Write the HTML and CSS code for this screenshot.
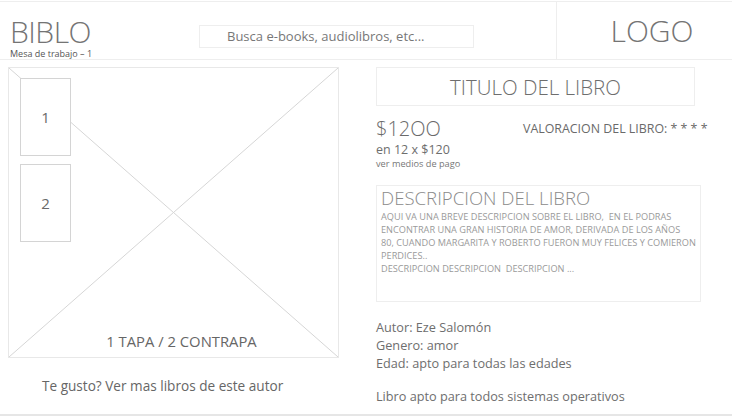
FILE: index.html
```html
<html>
<head>
<meta charset="utf-8">
<meta name="viewport" content="width=device-width, initial-scale=1">
<link rel="stylesheet" href="styles.css">
</head>
<body>
	<div class="header">
		<div class="brand">
			<div class="brand-name">BIBLO</div>
			<div class="brand-sub">Mesa de trabajo – 1</div>
		</div>
		<div class="search">Busca e-books, audiolibros, etc...</div>
		<div class="logo">LOGO</div>
	</div>
	<div class="main">
		<div class="left">
			<div class="cover">
				<svg class="cross" viewBox="0 0 100 100" preserveAspectRatio="none">
					<line x1="0" y1="0" x2="100" y2="100" vector-effect="non-scaling-stroke"></line>
					<line x1="100" y1="0" x2="0" y2="100" vector-effect="non-scaling-stroke"></line>
				</svg>
				<div class="thumb">1</div>
				<div class="thumb">2</div>
				<div class="cover-label">1 TAPA / 2 CONTRAPA</div>
			</div>
			<p class="more">Te gusto? Ver mas libros de este autor</p>
		</div>
		<div class="right">
			<div class="title">TITULO DEL LIBRO</div>
			<div class="price-row">
				<div class="price">
					<div class="price-main">$12OO</div>
					<div class="price-cuotas">en 12 x $120</div>
					<div class="price-link">ver medios de pago</div>
				</div>
				<div class="rating">VALORACION DEL LIBRO: * * * *</div>
			</div>
			<div class="desc">
				<div class="desc-title">DESCRIPCION DEL LIBRO</div>
				<div class="desc-text">AQUI VA UNA BREVE DESCRIPCION SOBRE EL LIBRO, &nbsp;EN EL PODRAS<br>ENCONTRAR UNA GRAN HISTORIA DE AMOR, DERIVADA DE LOS AÑOS<br>80, CUANDO MARGARITA Y ROBERTO FUERON MUY FELICES Y COMIERON<br>PERDICES..<br>DESCRIPCION DESCRIPCION &nbsp;DESCRIPCION ...</div>
			</div>
			<div class="info">
				<div>Autor: Eze Salomón</div>
				<div>Genero: amor</div>
				<div>Edad: apto para todas las edades</div>
			</div>
			<div class="os">Libro apto para todos sistemas operativos</div>
		</div>
	</div>
</body>
</html>
```

FILE: styles.css
```css
body {
	margin: 0;
	background: #fff;
	color: #6e6e6e;
	font-family: "Open Sans", "Noto Sans", sans-serif;
	width: 732px;
	height: 420px;
	overflow: hidden;
	border-top: 1px solid #eee;
	box-sizing: border-box;
	margin-top: 1px;
}

.header {
	display: flex;
	align-items: flex-start;
	height: 57px;
	border-bottom: 1px solid #eee;
}

.brand {
	padding: 15px 0 0 10px;
	width: 189px;
}

.brand-name {
	font-size: 30px;
	font-weight: 300;
	line-height: 30px;
	color: #747474;
	letter-spacing: -0.5px;
}

.brand-sub {
	font-size: 9px;
	line-height: 11px;
	color: #555;
	margin-top: 1px;
}

.search {
	margin-top: 23px;
	width: 246px;
	height: 21px;
	border: 1px solid #eee;
	padding-left: 27px;
	font-size: 13px;
	line-height: 21px;
	color: #777;
}

.logo {
	margin-left: auto;
	width: 176px;
	height: 57px;
	border-left: 1px solid #eee;
	font-size: 30px;
	font-weight: 300;
	line-height: 58px;
	text-align: center;
	padding-left: 15px;
	box-sizing: border-box;
	color: #747474;
}

.main {
	display: flex;
	padding-top: 7px;
	border-bottom: 2px solid #e6e6e6;
	height: 347px;
}

.left {
	width: 331px;
	margin-left: 8px;
}

.cover {
	position: relative;
	border: 1px solid #e8e8e8;
	padding: 10px 0 0 11px;
	box-sizing: border-box;
	height: 291px;
	display: flex;
	flex-direction: column;
	gap: 8px;
}

.cross {
	position: absolute;
	left: 0;
	top: 0;
	width: 100%;
	height: 100%;
	z-index: 0;
}

.cross line {
	stroke: #d6d6d6;
	stroke-width: 1;
}

.thumb {
	position: relative;
	width: 49px;
	height: 76px;
	border: 1px solid #d4d4d4;
	background: #fff;
	font-size: 15px;
	line-height: 76px;
	text-align: center;
	color: #6a6a6a;
}

.cover-label {
	position: relative;
	margin-top: auto;
	margin-bottom: 7px;
	padding-left: 5px;
	text-align: center;
	font-size: 14.8px;
	line-height: 18px;
	color: #666;
}

.more {
	margin: 19px 0 0 34px;
	font-size: 13.6px;
	line-height: 18px;
	color: #666;
}

.right {
	margin-left: 37px;
	width: 340px;
}

.title {
	width: 317px;
	height: 37px;
	border: 1px solid #eee;
	font-size: 20.5px;
	font-weight: 300;
	line-height: 39px;
	text-align: center;
	color: #6e6e6e;
}

.price-row {
	display: flex;
	margin-top: 10px;
}

.price {
	width: 147px;
}

.price-main {
	font-size: 20px;
	font-weight: 300;
	line-height: 26px;
	color: #6a6a6a;
}

.price-cuotas {
	font-size: 12.5px;
	line-height: 15px;
}

.price-link {
	font-size: 9.2px;
	line-height: 14px;
	color: #777;
}

.rating {
	padding-top: 4px;
	font-size: 12.4px;
	color: #6a6a6a;
}

.desc {
	margin-top: 14px;
	border: 1px solid #eee;
	padding-left: 4px;
	box-sizing: border-box;
	width: 325px;
	height: 117px;
}

.desc-title {
	font-size: 18.6px;
	font-weight: 300;
	line-height: 24px;
	color: #8a8a8a;
}

.desc-text {
	font-size: 9.2px;
	line-height: 13px;
	color: #9a9a9a;
	white-space: nowrap;
}

.info {
	margin-top: 16px;
	font-size: 12.7px;
	line-height: 18px;
}

.os {
	margin-top: 15px;
	font-size: 12.7px;
	line-height: 18px;
}
```
